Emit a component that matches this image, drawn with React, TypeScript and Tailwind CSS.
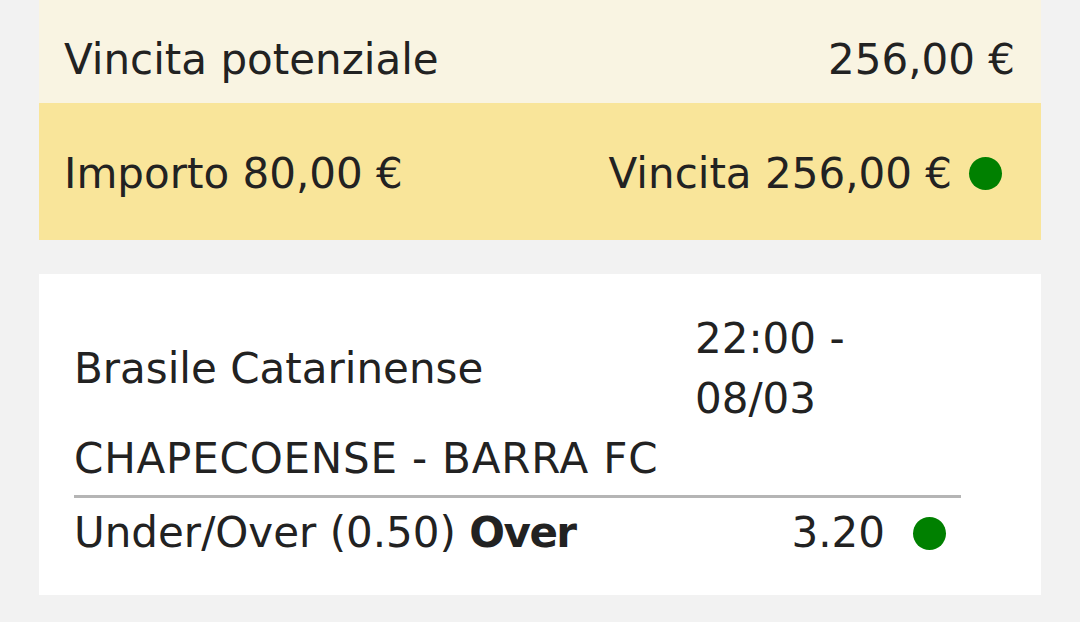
export default function App() {
  return (
    <div
      className="min-h-[622px] w-[1080px] bg-[#f2f2f2] px-[39px] text-[42px] leading-[60px] text-[#222222]"
      style={{ fontFamily: '"DejaVu Sans", sans-serif' }}
    >
      <div className="flex h-[103px] items-center justify-between bg-[#f9f4e2] pl-[25px] pr-[26px] pt-[16px]">
        <span>Vincita potenziale</span>
        <span>256,00 €</span>
      </div>
      <div className="flex h-[137px] items-center justify-between bg-[#f9e59a] pl-[25px] pr-[39px] pt-[4px]">
        <span>Importo 80,00 €</span>
        <div className="flex items-center gap-[17px]">
          <span>Vincita 256,00 €</span>
          <span className="h-[33px] w-[33px] rounded-full bg-[#008000]" />
        </div>
      </div>

      <div className="mt-[34px] bg-white pb-[32px] pl-[35px] pr-[80px] pt-[35px]">
        <div className="flex items-center">
          <span className="w-[621px]">Brasile Catarinense</span>
          <span>
            22:00 -
            <br />
            08/03
          </span>
        </div>
        <div className="tracking-[0.8px]">CHAPECOENSE - BARRA FC</div>
        <div className="mt-[6px] h-[3px] bg-[#b5b5b5]" />
        <div className="mt-[5px] flex items-center justify-between pr-[15px]">
          <span>
            Under/Over (0.50) <b className="font-bold tracking-[-1.5px]">Over</b>
          </span>
          <div className="flex items-center gap-[28px]">
            <span>3.20</span>
            <span className="h-[33px] w-[33px] rounded-full bg-[#008000]" />
          </div>
        </div>
      </div>
    </div>
  );
}
